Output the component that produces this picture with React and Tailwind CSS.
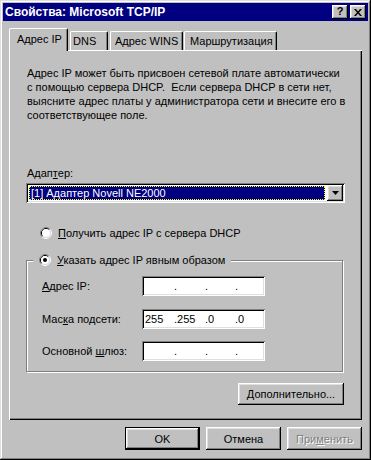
import React from "react";

const raised =
  "shadow-[inset_-1px_-1px_#000,inset_1px_1px_#fff,inset_-2px_-2px_#808080,inset_2px_2px_#dfdfdf]";
const sunken =
  "shadow-[inset_1px_1px_#808080,inset_-1px_-1px_#fff,inset_2px_2px_#000,inset_-2px_-2px_#dfdfdf]";

function Radio({ checked }) {
  return (
    <svg width="12" height="12" viewBox="0 0 12 12" className="shrink-0">
      <path d="M2.11 9.89 A5.5 5.5 0 0 1 9.89 2.11" stroke="#808080" strokeWidth="1" fill="none" />
      <path d="M9.89 2.11 A5.5 5.5 0 0 1 2.11 9.89" stroke="#fff" strokeWidth="1" fill="none" />
      <path d="M2.82 9.18 A4.5 4.5 0 0 1 9.18 2.82" stroke="#000" strokeWidth="1" fill="none" />
      <path d="M9.18 2.82 A4.5 4.5 0 0 1 2.82 9.18" stroke="#dfdfdf" strokeWidth="1" fill="none" />
      <circle cx="6" cy="6" r="4" fill="#fff" />
      {checked && <circle cx="6" cy="6" r="2" fill="#000" />}
    </svg>
  );
}

function IpField({ parts }) {
  return (
    <div className={`w-[123px] h-[20px] bg-white ${sunken} flex items-center pl-[3px]`}>
      <span className="w-[29px]">{parts[0]}</span>
      <span className="w-[31px]">.{parts[1]}</span>
      <span className="w-[30px]">.{parts[2]}</span>
      <span>.{parts[3]}</span>
    </div>
  );
}

function Field({ label, parts, className }) {
  return (
    <div className={`flex items-center h-[20px] ${className}`}>
      <div className="w-[100px]">{label}</div>
      <IpField parts={parts} />
    </div>
  );
}

export default function App() {
  return (
    <div className="w-[371px] h-[460px] bg-[#c0c0c0] p-[3px] shadow-[inset_-1px_-1px_#000,inset_1px_1px_#dfdfdf,inset_-2px_-2px_#808080,inset_2px_2px_#fff] font-['Liberation_Sans',Arial,sans-serif] text-[11px] leading-[14px] text-black select-none">
      <div className="h-[18px] bg-[#000080] flex items-center pl-[2px] pr-[2px]">
        <span className="text-white font-bold text-[12px]">Свойства: Microsoft TCP/IP</span>
        <div className="ml-auto flex gap-[2px]">
          <div className={`w-[16px] h-[14px] bg-[#c0c0c0] ${raised} flex items-center justify-center font-bold text-[11px] leading-none pb-[1px]`}>
            ?
          </div>
          <div className={`w-[16px] h-[14px] bg-[#c0c0c0] ${raised} flex items-center justify-center`}>
            <svg width="8" height="7" viewBox="0 0 8 7">
              <path d="M0 0h2l2 2.5 2-2.5h2l-3 3.5 3 3.5h-2l-2-2.5-2 2.5h-2l3-3.5z" fill="#000" />
            </svg>
          </div>
        </div>
      </div>

      <div className="px-[6px] pt-[7px]">
        <div className="flex items-end h-[22px]">
          <div className="relative z-10 h-[23px] -mb-px w-[59px] bg-[#c0c0c0] border-l border-t border-r border-l-white border-t-white border-r-black rounded-t-[2px] shadow-[inset_-1px_0_#808080] pl-[7px] pt-[3px]">
            Адрес IP
          </div>
          <div className="ml-[2px] h-[19px] w-[38px] border-l border-t border-r border-l-white border-t-white border-r-black rounded-t-[2px] shadow-[inset_-1px_0_#808080] pl-[2px] pt-[2px]">
            DNS
          </div>
          <div className="ml-[2px] h-[19px] w-[73px] border-l border-t border-r border-l-white border-t-white border-r-black rounded-t-[2px] shadow-[inset_-1px_0_#808080] pl-[4px] pt-[2px]">
            Адрес WINS
          </div>
          <div className="ml-[1px] h-[19px] w-[93px] border-l border-t border-r border-l-white border-t-white border-r-black rounded-t-[2px] shadow-[inset_-1px_0_#808080] pl-[5px] pt-[2px]">
            Маршрутизация
          </div>
        </div>

        <div className="h-[370px] shadow-[inset_1px_1px_#fff,inset_-1px_-1px_#000,inset_-2px_-2px_#808080] pl-[18px] pt-[16px] flex flex-col">
          <div className="whitespace-nowrap">
            <div>Адрес IP может быть присвоен сетевой плате автоматически</div>
            <div>с помощью сервера DHCP.&nbsp; Если сервера DHCP в сети нет,</div>
            <div>выясните адрес платы у администратора сети и внесите его в</div>
            <div>соответствующее поле.</div>
          </div>

          <div className="mt-[44px]">
            Адап<span className="underline">т</span>ер:
          </div>
          <div className={`mt-[3px] -ml-px w-[319px] h-[20px] bg-white ${sunken} flex items-center pl-[3px] pr-[2px]`}>
            <div className="w-[296px] h-[14px] bg-[#000080] border border-dotted border-[#ffff00] text-white leading-[12px] pl-[1px]">
              [1] Адаптер Novell NE2000
            </div>
            <div className={`ml-auto w-[16px] h-[16px] bg-[#c0c0c0] ${raised} flex items-center justify-center`}>
              <svg width="7" height="4" viewBox="0 0 7 4">
                <path d="M0 0h7l-3.5 4z" fill="#000" />
              </svg>
            </div>
          </div>

          <div className="mt-[23px] h-[14px] pl-[13px] flex items-center gap-[6px]">
            <Radio />
            <span>
              <span className="underline">П</span>олучить адрес IP с сервера DHCP
            </span>
          </div>

          <fieldset className="mt-[13px] -ml-px w-[317px] border border-[#808080] shadow-[1px_1px_#fff,inset_1px_1px_#fff] px-[6px] pt-[9px] pb-[10px]">
            <legend className="px-[6px] bg-[#c0c0c0]">
              <div className="h-[14px] flex items-center gap-[6px]">
                <Radio checked />
                <span>
                  <span className="underline">У</span>казать адрес IP явным образом
                </span>
              </div>
            </legend>
            <div className="pl-[9px]">
              <Field
                label={<><span className="underline">А</span>дрес IP:</>}
                parts={["", "", "", ""]}
              />
              <Field
                className="mt-[13px]"
                label={<>Мас<span className="underline">к</span>а подсети:</>}
                parts={["255", "255", "0", "0"]}
              />
              <Field
                className="mt-[12px]"
                label={<>Основной <span className="underline">ш</span>люз:</>}
                parts={["", "", "", ""]}
              />
            </div>
          </fieldset>

          <div className={`mt-[11px] ml-[211px] w-[106px] h-[22px] ${raised} flex items-center justify-center`}>
            <span>
              <span className="underline">Д</span>ополнительно...
            </span>
          </div>
        </div>

        <div className="mt-[7px] flex justify-end gap-[6px]">
          <div className={`w-[75px] h-[23px] border border-black ${raised} flex items-center justify-center`}>
            OK
          </div>
          <div className={`w-[75px] h-[23px] ${raised} flex items-center justify-center`}>
            Отмена
          </div>
          <div className={`w-[75px] h-[23px] ${raised} flex items-center justify-center text-[#808080] [text-shadow:1px_1px_#fff]`}>
            <span>
              При<span className="underline">м</span>енить
            </span>
          </div>
        </div>
      </div>
    </div>
  );
}
